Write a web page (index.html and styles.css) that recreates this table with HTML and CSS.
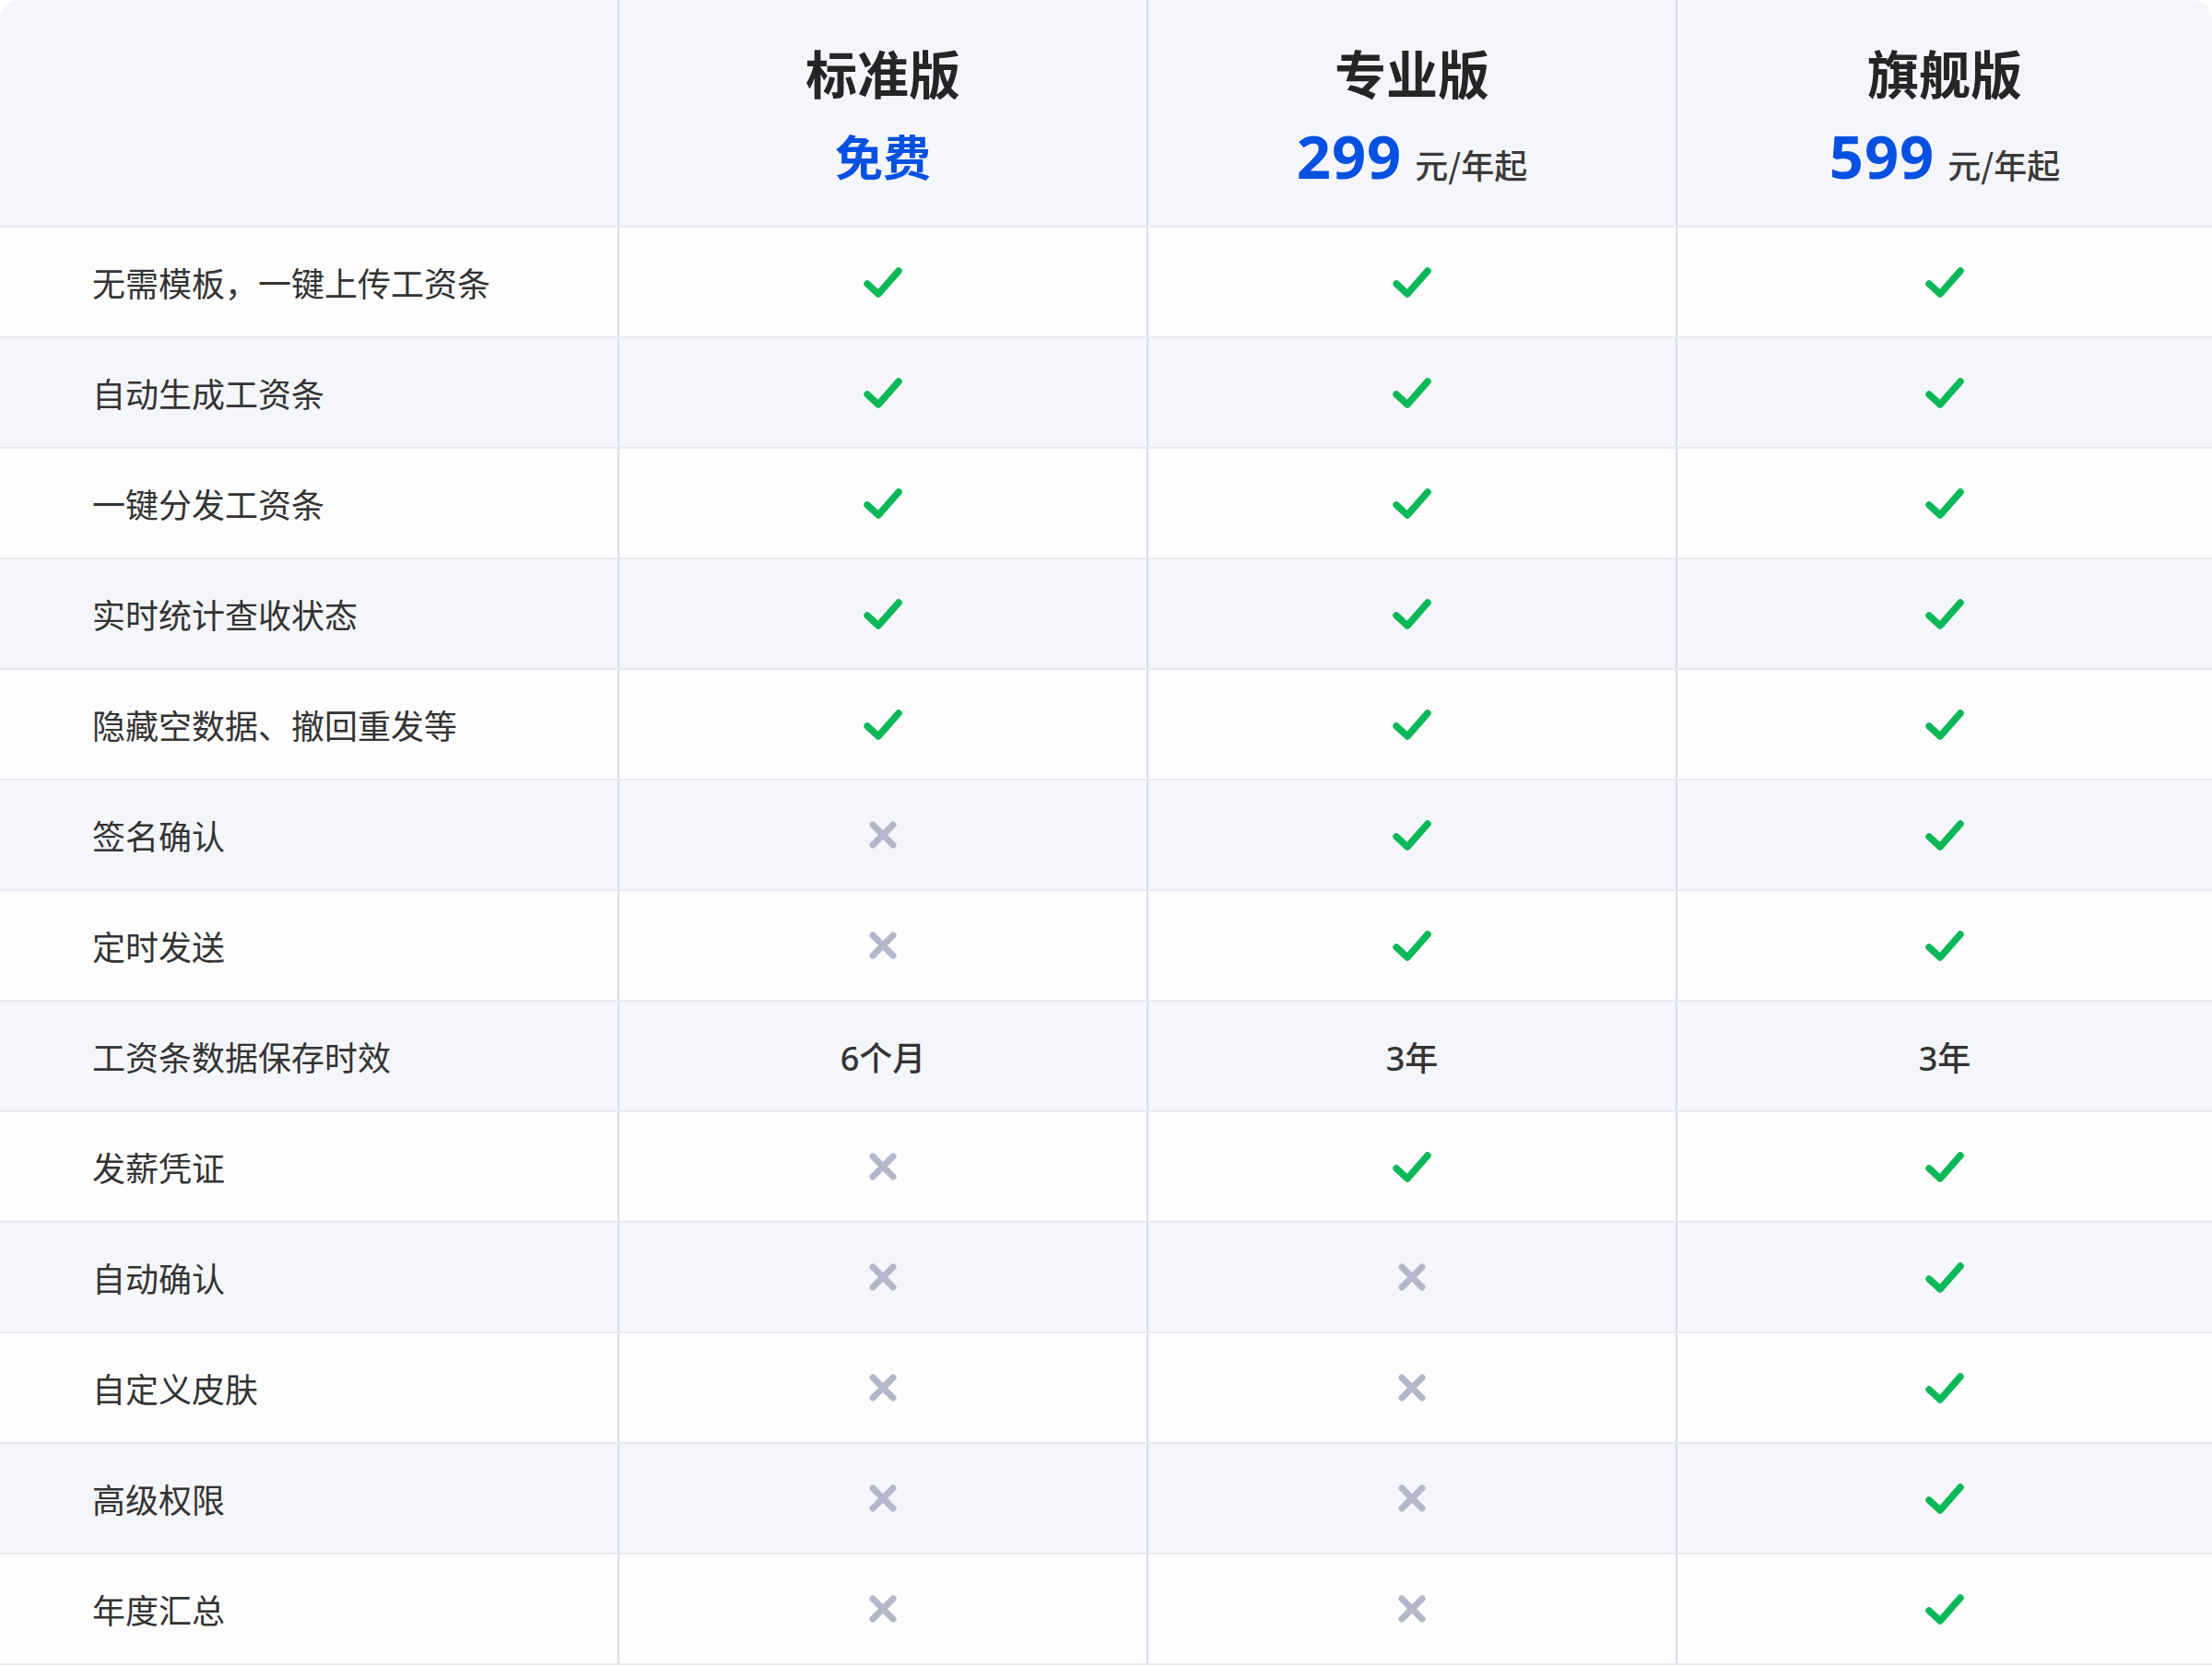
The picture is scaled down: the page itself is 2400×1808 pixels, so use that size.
FILE: index.html
```html
<!DOCTYPE html>
<html lang="zh-CN">
<head>
<meta charset="utf-8">
<title>版本对比</title>
<link rel="stylesheet" href="styles.css">
</head>
<body>
<svg width="0" height="0" class="defs" aria-hidden="true">
  <defs>
    <symbol id="ok" viewBox="0 0 42 36"><path d="M4 20 L16 31 L38 6" fill="none" stroke="#0bb857" stroke-width="7.5" stroke-linecap="round" stroke-linejoin="round"/></symbol>
    <symbol id="no" viewBox="0 0 30 30"><path d="M4 4 L26 26 M26 4 L4 26" fill="none" stroke="#b4b7ca" stroke-width="7" stroke-linecap="round"/></symbol>
  </defs>
</svg>
<div class="table">
  <div class="row head">
    <div class="cell label"></div>
    <div class="cell plan"><div class="title">标准版</div><div class="price"><span class="free">免费</span></div></div>
    <div class="cell plan"><div class="title">专业版</div><div class="price"><span class="num">299</span><span class="unit">元/年起</span></div></div>
    <div class="cell plan"><div class="title">旗舰版</div><div class="price"><span class="num">599</span><span class="unit">元/年起</span></div></div>
  </div>
  <div class="row"><div class="cell label">无需模板，一键上传工资条</div><div class="cell"><svg class="ok"><use href="#ok"/></svg></div><div class="cell"><svg class="ok"><use href="#ok"/></svg></div><div class="cell"><svg class="ok"><use href="#ok"/></svg></div></div>
  <div class="row alt"><div class="cell label">自动生成工资条</div><div class="cell"><svg class="ok"><use href="#ok"/></svg></div><div class="cell"><svg class="ok"><use href="#ok"/></svg></div><div class="cell"><svg class="ok"><use href="#ok"/></svg></div></div>
  <div class="row"><div class="cell label">一键分发工资条</div><div class="cell"><svg class="ok"><use href="#ok"/></svg></div><div class="cell"><svg class="ok"><use href="#ok"/></svg></div><div class="cell"><svg class="ok"><use href="#ok"/></svg></div></div>
  <div class="row alt"><div class="cell label">实时统计查收状态</div><div class="cell"><svg class="ok"><use href="#ok"/></svg></div><div class="cell"><svg class="ok"><use href="#ok"/></svg></div><div class="cell"><svg class="ok"><use href="#ok"/></svg></div></div>
  <div class="row"><div class="cell label">隐藏空数据、撤回重发等</div><div class="cell"><svg class="ok"><use href="#ok"/></svg></div><div class="cell"><svg class="ok"><use href="#ok"/></svg></div><div class="cell"><svg class="ok"><use href="#ok"/></svg></div></div>
  <div class="row alt"><div class="cell label">签名确认</div><div class="cell"><svg class="no"><use href="#no"/></svg></div><div class="cell"><svg class="ok"><use href="#ok"/></svg></div><div class="cell"><svg class="ok"><use href="#ok"/></svg></div></div>
  <div class="row"><div class="cell label">定时发送</div><div class="cell"><svg class="no"><use href="#no"/></svg></div><div class="cell"><svg class="ok"><use href="#ok"/></svg></div><div class="cell"><svg class="ok"><use href="#ok"/></svg></div></div>
  <div class="row alt"><div class="cell label">工资条数据保存时效</div><div class="cell val">6个月</div><div class="cell val">3年</div><div class="cell val">3年</div></div>
  <div class="row"><div class="cell label">发薪凭证</div><div class="cell"><svg class="no"><use href="#no"/></svg></div><div class="cell"><svg class="ok"><use href="#ok"/></svg></div><div class="cell"><svg class="ok"><use href="#ok"/></svg></div></div>
  <div class="row alt"><div class="cell label">自动确认</div><div class="cell"><svg class="no"><use href="#no"/></svg></div><div class="cell"><svg class="no"><use href="#no"/></svg></div><div class="cell"><svg class="ok"><use href="#ok"/></svg></div></div>
  <div class="row"><div class="cell label">自定义皮肤</div><div class="cell"><svg class="no"><use href="#no"/></svg></div><div class="cell"><svg class="no"><use href="#no"/></svg></div><div class="cell"><svg class="ok"><use href="#ok"/></svg></div></div>
  <div class="row alt"><div class="cell label">高级权限</div><div class="cell"><svg class="no"><use href="#no"/></svg></div><div class="cell"><svg class="no"><use href="#no"/></svg></div><div class="cell"><svg class="ok"><use href="#ok"/></svg></div></div>
  <div class="row"><div class="cell label">年度汇总</div><div class="cell"><svg class="no"><use href="#no"/></svg></div><div class="cell"><svg class="no"><use href="#no"/></svg></div><div class="cell"><svg class="ok"><use href="#ok"/></svg></div></div>
</div>
</body>
</html>
```
FILE: styles.css
```css
html, body {
  margin: 0;
  padding: 0;
  background: #ffffff;
}
body {
  font-family: "Noto Sans", "Noto Sans CJK SC", sans-serif;
  color: #333333;
}
.defs {
  position: absolute;
  width: 0;
  height: 0;
  overflow: hidden;
}
.table {
  width: 2400px;
  border-radius: 22px 22px 0 0;
  overflow: hidden;
}
.row {
  display: grid;
  grid-template-columns: 670px 574px 574px 1fr;
  height: 120px;
  box-sizing: border-box;
  border-bottom: 2px solid #e8eaf1;
  background: #fdfdfe;
}
.row.alt {
  background: #f5f6fb;
}
.row.head {
  height: 247px;
  background: #f5f6fb;
}
.cell {
  display: flex;
  align-items: center;
  justify-content: center;
  border-left: 2px solid #d7dbea;
}
.cell.label {
  border-left: none;
  justify-content: flex-start;
  padding-left: 100px;
  font-family: "Noto Sans CJK SC", sans-serif;
  font-size: 36px;
  color: #333333;
}
.cell.val {
  font-family: "Noto Sans", "Noto Sans CJK SC", sans-serif;
  font-size: 36px;
  font-weight: 500;
  color: #333333;
}
.plan {
  flex-direction: column;
  justify-content: flex-start;
  padding-top: 50px;
  gap: 31px;
}
.title {
  font-family: "Noto Sans CJK SC", sans-serif;
  font-size: 56px;
  line-height: 56px;
  font-weight: 700;
  color: #252525;
}
.price {
  display: flex;
  align-items: baseline;
  height: 64px;
  line-height: 64px;
}
.free {
  font-family: "Noto Sans CJK SC", sans-serif;
  font-size: 52px;
  font-weight: 700;
  color: #0650e2;
}
.num {
  font-family: "Noto Sans", sans-serif;
  font-size: 65px;
  font-weight: 700;
  color: #0650e2;
  letter-spacing: 1px;
}
.unit {
  font-family: "Noto Sans CJK SC", sans-serif;
  font-size: 36px;
  font-weight: 500;
  color: #3a3a3a;
  margin-left: 14px;
}
.ok {
  width: 42px;
  height: 36px;
}
.no {
  width: 30px;
  height: 30px;
}
```
